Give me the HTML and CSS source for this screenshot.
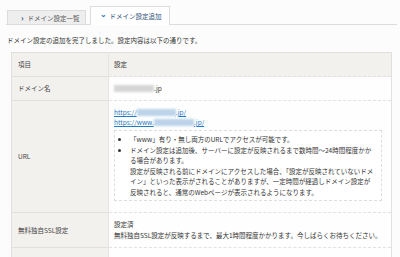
FILE: index.html
```html
<!DOCTYPE html>
<html lang="ja">
<head>
    <meta charset="UTF-8">
    <title>ドメイン設定追加</title>
    <link rel="stylesheet" href="styles.css">
</head>
<body>
    <div class="page">
        <!-- タブ -->
        <ul class="tabs">
            <li class="tab"><span class="chev">&#8250;</span>ドメイン設定一覧</li>
            <li class="tab active"><span class="chev down">&#8964;</span>ドメイン設定追加</li>
        </ul>

        <p class="message">ドメイン設定の追加を完了しました。設定内容は以下の通りです。</p>

        <table class="result">
            <tr class="head">
                <th>項目</th>
                <td>設定</td>
            </tr>
            <tr>
                <th>ドメイン名</th>
                <td><span class="blur grey w40"></span>.jp</td>
            </tr>
            <tr>
                <th>URL</th>
                <td>
                    <div class="links">
                        <a href="#">https://<span class="blur blue w39"></span>.jp/</a><br>
                        <a href="#">https://www.<span class="blur blue w40"></span>.jp/</a>
                    </div>
                    <div class="note">
                        <ul>
                            <li>「www」有り・無し両方のURLでアクセスが可能です。</li>
                            <li>ドメイン設定は追加後、サーバーに設定が反映されるまで数時間～24時間程度かかる場合があります。<br>設定が反映される前にドメインにアクセスした場合、「設定が反映されていないドメイン」といった表示がされることがありますが、一定時間が経過しドメイン設定が反映されると、通常のWebページが表示されるようになります。</li>
                        </ul>
                    </div>
                </td>
            </tr>
            <tr>
                <th>無料独自SSL設定</th>
                <td>設定済<br>無料独自SSL設定が反映するまで、最大1時間程度かかります。今しばらくお待ちください。</td>
            </tr>
            <tr>
                <th>&nbsp;</th>
                <td>&nbsp;</td>
            </tr>
        </table>
    </div>
</body>
</html>
```

FILE: styles.css
```css
body {
    margin: 0;
    background-color: #fbfcfb;
    font-family: "Noto Sans CJK JP", "Noto Sans", sans-serif;
    font-size: 6.5px;
    color: #444;
}

.page {
    padding: 6px 3px 0 6px;
}

.tabs {
    display: flex;
    align-items: flex-end;
    gap: 4px;
    list-style: none;
    margin: 0;
    padding: 0 0 0 1px;
    border-bottom: 1px solid #dcdcdc;
    height: 18px;
}

.tab {
    display: flex;
    align-items: center;
    height: 13px;
    padding: 0 5px 0 13px;
    background-color: #eeeeee;
    border: 1px solid #dcdcdc;
    border-bottom: none;
    color: #555;
}

.tab.active {
    height: 18px;
    padding: 0 7px 0 9px;
    background-color: #fff;
    color: #2e4f78;
    margin-bottom: -1px;
}

.chev {
    font-weight: bold;
    color: #2e4f78;
    margin-right: 4px;
    font-size: 8px;
    line-height: 1;
}

.chev.down {
    color: #3a7bc8;
    font-size: 8px;
    margin-right: 3px;
    position: relative;
    top: -2px;
}

.message {
    margin: 10px 0 0 1px;
    line-height: 11px;
    color: #333;
}

.result {
    margin: 6px 0 0 5px;
    width: 381px;
    border-collapse: collapse;
    border: 1px solid #e2e0dc;
}

.result th,
.result td {
    text-align: left;
    vertical-align: middle;
    line-height: 11px;
    font-weight: normal;
}

.result th {
    width: 84px;
    padding: 6px 6px;
    background-color: #f3f1ee;
    border-top: 1px solid #e2e0dc;
    border-right: 1px solid #e6e4e0;
    color: #444;
}

.result td {
    padding: 6px 5px;
    background-color: #fdfefd;
    border-top: 1px dashed #e2e2e2;
    color: #333;
}

.result tr.head td {
    background-color: #f3f1ee;
    border-top: 1px solid #e2e0dc;
}

.blur {
    display: inline-block;
    height: 7px;
    vertical-align: -1px;
    filter: blur(1px);
}

.blur.grey {
    background-color: #d6d6d6;
}

.blur.blue {
    background-color: #bcd3ea;
}

.w39 {
    width: 39px;
}

.w40 {
    width: 40px;
}

.links {
    line-height: 10px;
}

.links a {
    color: #2478c8;
}

.note {
    margin: 3px 4px 5px 0;
    padding: 3px 6px 3px 4px;
    background-color: #fff;
    border: 1px dashed #dddddd;
}

.note ul {
    margin: 0;
    padding: 0 0 0 11px;
}

.note li {
    line-height: 10.5px;
}
```
